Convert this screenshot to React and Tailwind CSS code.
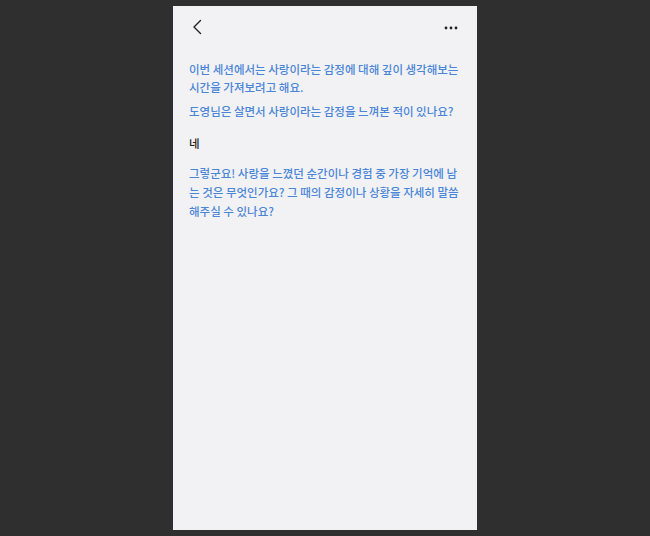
export default function App() {
  const font = { fontFamily: '"Noto Sans CJK KR", "Noto Sans", sans-serif' };
  return (
    <div className="w-[650px] h-[536px] bg-[#2f2f2f] flex justify-center pt-[6px]" style={font}>
      <div className="w-[304px] h-[524px] bg-[#f2f2f4] flex flex-col">
        <div className="h-[42px] flex items-center justify-between px-[16px]">
          <svg width="14" height="16" viewBox="0 0 14 16" className="ml-[1px]">
            <path d="M10.5 1.5 L4 8 L10.5 14.5" fill="none" stroke="#222" strokeWidth="1.4" strokeLinecap="round" strokeLinejoin="round" />
          </svg>
          <svg width="16" height="6" viewBox="0 0 16 6" className="mr-[2px] mt-[1px]">
            <circle cx="3" cy="3" r="1.4" fill="#222" />
            <circle cx="8" cy="3" r="1.4" fill="#222" />
            <circle cx="13" cy="3" r="1.4" fill="#222" />
          </svg>
        </div>
        <div className="px-[16px] pt-[12px] text-[11.5px] leading-[18px] font-medium">
          <p className="text-[#4a86d8]">이번 세션에서는 사랑이라는 감정에 대해 깊이 생각해보는 시간을 가져보려고 해요.</p>
          <p className="text-[#4a86d8] mt-[6px]">도영님은 살면서 사랑이라는 감정을 느껴본 적이 있나요?</p>
          <p className="text-[#222] mt-[14px]">네</p>
          <p className="text-[#4a86d8] mt-[12px] leading-[19px]">그렇군요! 사랑을 느꼈던 순간이나 경험 중 가장 기억에 남는 것은 무엇인가요? 그 때의 감정이나 상황을 자세히 말씀해주실 수 있나요?</p>
        </div>
      </div>
    </div>
  );
}
